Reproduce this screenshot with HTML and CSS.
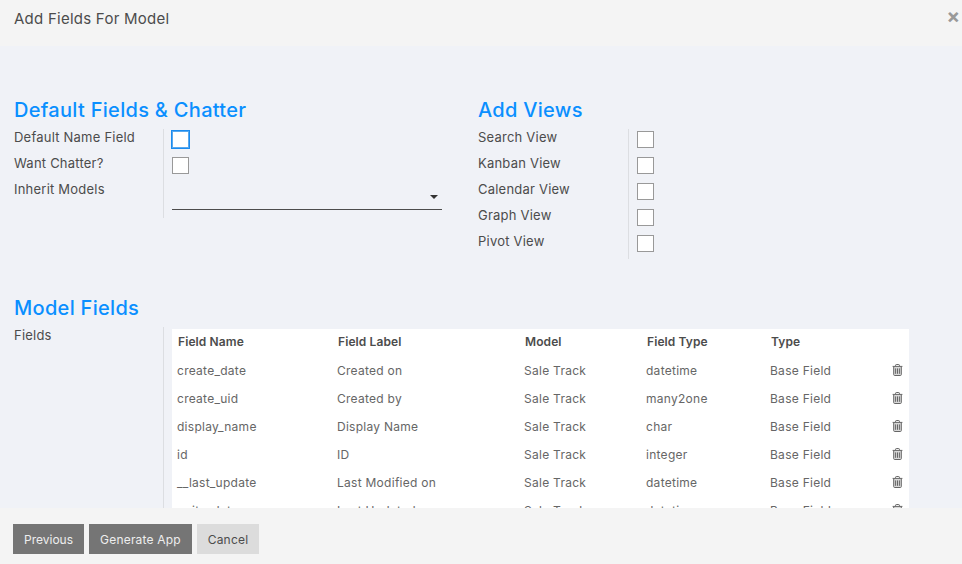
FILE: index.html
```html
<!DOCTYPE html>
<html lang="en">

<head>
    <meta charset="UTF-8">
    <title>Add Fields For Model</title>
    <link rel="stylesheet" href="styles.css">
</head>

<body>
    <svg class="sprite" width="0" height="0">
        <symbol id="trash" viewBox="0 0 11 12">
            <path d="M1.7 2.6v8c0 .5.3.9.8.9h6c.5 0 .8-.4.8-.9v-8z" fill="#d8d8d8"/>
            <path d="M3.6 2.2V1.2C3.6.8 3.9.5 4.3.5h2.4c.4 0 .7.3.7.7v1M.6 2.4h9.8M1.7 2.6v8c0 .5.3.9.8.9h6c.5 0 .8-.4.8-.9v-8" fill="none" stroke="currentColor" stroke-width="1"/>
            <path d="M3.6 4.4v5.4M5.5 4.4v5.4M7.4 4.4v5.4" fill="none" stroke="currentColor" stroke-width="1"/>
        </symbol>
    </svg>

    <header class="modal-header">
        <h4>Add Fields For Model</h4>
        <span class="close">&times;</span>
    </header>

    <main class="modal-body">
        <div class="columns">
            <section>
                <h2>Default Fields &amp; Chatter</h2>
                <div class="fields">
                    <div class="labels">
                        <label>Default Name Field</label>
                        <label>Want Chatter?</label>
                        <label>Inherit Models</label>
                    </div>
                    <div class="inputs">
                        <div class="cell"><span class="check focus"></span></div>
                        <div class="cell"><span class="check"></span></div>
                        <div class="select"><span class="arrow"></span></div>
                    </div>
                </div>
            </section>
            <section class="views">
                <h2>Add Views</h2>
                <div class="fields">
                    <div class="labels">
                        <label>Search View</label>
                        <label>Kanban View</label>
                        <label>Calendar View</label>
                        <label>Graph View</label>
                        <label>Pivot View</label>
                    </div>
                    <div class="inputs">
                        <div class="cell"><span class="check"></span></div>
                        <div class="cell"><span class="check"></span></div>
                        <div class="cell"><span class="check"></span></div>
                        <div class="cell"><span class="check"></span></div>
                        <div class="cell"><span class="check"></span></div>
                    </div>
                </div>
            </section>
        </div>

        <section class="model-fields">
            <h2>Model Fields</h2>
            <div class="fields">
                <div class="labels">
                    <label>Fields</label>
                </div>
                <div class="inputs table-wrap">
                    <table>
                        <thead>
                            <tr>
                                <th class="c-name">Field Name</th>
                                <th class="c-label">Field Label</th>
                                <th class="c-model">Model</th>
                                <th class="c-ftype">Field Type</th>
                                <th class="c-type">Type</th>
                                <th></th>
                            </tr>
                        </thead>
                        <tbody>
                            <tr><td>create_date</td><td>Created on</td><td>Sale Track</td><td>datetime</td><td>Base Field</td><td><svg class="trash"><use href="#trash"/></svg></td></tr>
                            <tr><td>create_uid</td><td>Created by</td><td>Sale Track</td><td>many2one</td><td>Base Field</td><td><svg class="trash"><use href="#trash"/></svg></td></tr>
                            <tr><td>display_name</td><td>Display Name</td><td>Sale Track</td><td>char</td><td>Base Field</td><td><svg class="trash"><use href="#trash"/></svg></td></tr>
                            <tr><td>id</td><td>ID</td><td>Sale Track</td><td>integer</td><td>Base Field</td><td><svg class="trash"><use href="#trash"/></svg></td></tr>
                            <tr><td>__last_update</td><td>Last Modified on</td><td>Sale Track</td><td>datetime</td><td>Base Field</td><td><svg class="trash"><use href="#trash"/></svg></td></tr>
                            <tr><td>write_date</td><td>Last Updated on</td><td>Sale Track</td><td>datetime</td><td>Base Field</td><td><svg class="trash"><use href="#trash"/></svg></td></tr>
                        </tbody>
                    </table>
                </div>
            </div>
        </section>
    </main>

    <footer class="modal-footer">
        <button class="btn btn-prev">Previous</button>
        <button class="btn btn-generate">Generate App</button>
        <button class="btn btn-light">Cancel</button>
    </footer>
</body>

</html>
```

FILE: styles.css
```css
html,
body {
    height: 100%;
}

body {
    margin: 0;
    display: flex;
    flex-direction: column;
    overflow: hidden;
    background-color: #f0f2f7;
    color: #4c4c4c;
    font-family: Inter, "Open Sans", sans-serif;
    font-size: 13px;
}

.sprite {
    position: absolute;
}

.modal-header {
    height: 46px;
    flex: none;
    display: flex;
    justify-content: space-between;
    background-color: #f4f4f4;
}

.modal-header h4 {
    margin: 0;
    padding: 10px 0 0 14px;
    font-size: 15px;
    line-height: 18px;
    font-weight: 400;
    letter-spacing: 0.25px;
}

.close {
    margin-right: 2px;
    padding-top: 4px;
    font-size: 20px;
    line-height: 24px;
    font-weight: 700;
    color: #999;
}

.modal-body {
    flex: 1;
    min-height: 0;
    overflow: hidden;
    padding: 52px 0 0 14px;
}

.columns {
    display: grid;
    grid-template-columns: 464px 464px;
}

h2 {
    margin: 0;
    height: 31px;
    font-size: 20px;
    line-height: 24px;
    font-weight: 500;
    letter-spacing: 0.3px;
    color: #0a8fff;
}

.fields {
    display: flex;
}

.labels {
    width: 149px;
    flex: none;
}

.views .labels {
    width: 150px;
}

.labels label {
    display: block;
    height: 26px;
    line-height: 17px;
    letter-spacing: 0.22px;
}

.inputs {
    border-left: 1px solid #dcdee2;
    padding-left: 8px;
    width: 270px;
}

.cell {
    height: 26px;
    padding-top: 2px;
    box-sizing: border-box;
}

.check {
    display: block;
    width: 15px;
    height: 15px;
    border: 1px solid #999;
    background-color: #fff;
}

.check.focus {
    border-color: #5aa9ee;
    box-shadow: 0 0 0 1px #1a8cf0;
}

.select {
    position: relative;
    height: 28px;
    margin-bottom: 8px;
    border-bottom: 1px solid #4c4c4c;
}

.arrow {
    position: absolute;
    right: 4px;
    top: 14px;
    border-top: 4px solid #333;
    border-left: 4px solid transparent;
    border-right: 4px solid transparent;
}

.model-fields {
    margin-top: 37px;
}

.table-wrap {
    width: 737px;
    padding-top: 2px;
}

table {
    width: 737px;
    table-layout: fixed;
    border-collapse: collapse;
    background-color: #fff;
}

th {
    height: 24px;
    padding: 0 0 3px 6px;
    text-align: left;
    font-size: 12px;
    font-weight: 600;
    letter-spacing: 0.1px;
}

td {
    height: 28px;
    padding: 0 0 0 5px;
    font-size: 12px;
    letter-spacing: 0.27px;
    color: #666;
    white-space: nowrap;
}

.c-name {
    width: 154px;
}

.c-label {
    width: 181px;
}

.c-model {
    width: 116px;
}

.c-ftype {
    width: 118px;
}

.c-type {
    width: 114px;
}

.trash {
    display: block;
    margin-left: 2px;
    width: 11px;
    height: 12px;
    color: #666;
}

.modal-footer {
    height: 56px;
    flex: none;
    box-sizing: border-box;
    display: flex;
    gap: 5px;
    padding: 16px 0 0 13px;
    background-color: #f4f4f4;
}

.btn {
    height: 30px;
    width: 62px;
    padding: 0;
    border: 0;
    background-color: #757575;
    color: #eee;
    font-family: inherit;
    font-size: 12px;
    letter-spacing: 0.2px;
}

.btn-prev {
    width: 71px;
    letter-spacing: 0;
}

.btn-generate {
    width: 103px;
}

.btn-light {
    background-color: #dcdcdc;
    color: #4c4c4c;
}
```
